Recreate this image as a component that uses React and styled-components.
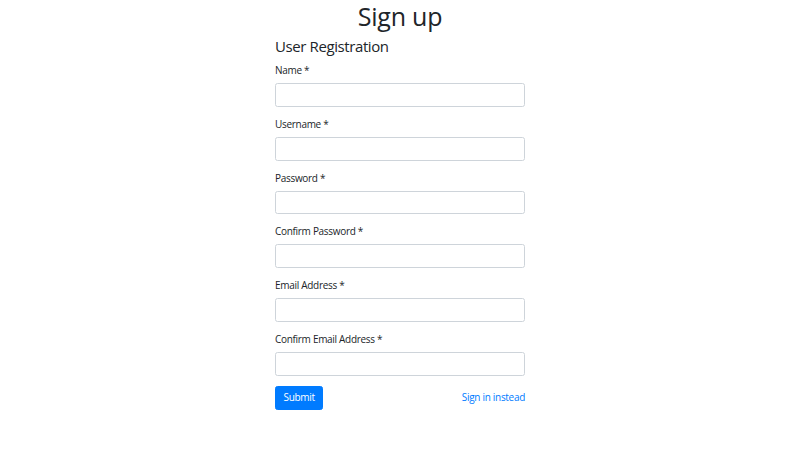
import React from 'react'
import styled, { createGlobalStyle } from 'styled-components'

const GlobalStyle = createGlobalStyle`
  * { box-sizing: border-box; }
  body {
    margin: 0;
    background: #fff;
    color: #212529;
    font-family: "Open Sans", "Noto Sans", sans-serif;
    font-size: 10px;
    line-height: 1.5;
  }
`

const Page = styled.div`
  width: 800px;
  height: 450px;
  padding-top: 1px;
  display: flex;
  flex-direction: column;
  align-items: center;
`

const Title = styled.h1`
  margin: 0 0 6px;
  font-size: 25px;
  font-weight: 400;
  line-height: 1.2;
  letter-spacing: -0.2px;
  text-align: center;
`

const Form = styled.form`
  width: 250px;
  display: flex;
  flex-direction: column;
`

const Subtitle = styled.h4`
  margin: 0 0 8px;
  font-size: 15px;
  font-weight: 400;
  line-height: 1.2;
  letter-spacing: -0.4px;
`

const Group = styled.div`
  display: flex;
  flex-direction: column;
  margin-bottom: 10px;
`

const Label = styled.label`
  margin-bottom: 5px;
  font-size: 10px;
  line-height: 15px;
  letter-spacing: -0.3px;
`

const Input = styled.input`
  height: 23.75px;
  width: 100%;
  padding: 3.75px 7.5px;
  font: inherit;
  color: #495057;
  border: 1px solid #ced4da;
  border-radius: 2.5px;
  background: #fff;
  outline: none;
`

const Actions = styled.div`
  display: flex;
  align-items: center;
  justify-content: space-between;
`

const Button = styled.button`
  height: 24px;
  padding: 0 7.5px;
  font: inherit;
  letter-spacing: -0.3px;
  color: #fff;
  background: #007bff;
  border: 1px solid #007bff;
  border-radius: 2.5px;
  cursor: pointer;
`

const Link = styled.a`
  color: #007bff;
  text-decoration: none;
  letter-spacing: -0.3px;
`

const fields = [
  { label: 'Name', type: 'text' },
  { label: 'Username', type: 'text' },
  { label: 'Password', type: 'password' },
  { label: 'Confirm Password', type: 'password' },
  { label: 'Email Address', type: 'email' },
  { label: 'Confirm Email Address', type: 'email' },
]

export default function App() {
  return (
    <Page>
      <GlobalStyle />
      <Title>Sign up</Title>
      <Form onSubmit={e => e.preventDefault()}>
        <Subtitle>User Registration</Subtitle>
        {fields.map(f => (
          <Group key={f.label}>
            <Label>{f.label} *</Label>
            <Input type={f.type} />
          </Group>
        ))}
        <Actions>
          <Button type="submit">Submit</Button>
          <Link href="#">Sign in instead</Link>
        </Actions>
      </Form>
    </Page>
  )
}
